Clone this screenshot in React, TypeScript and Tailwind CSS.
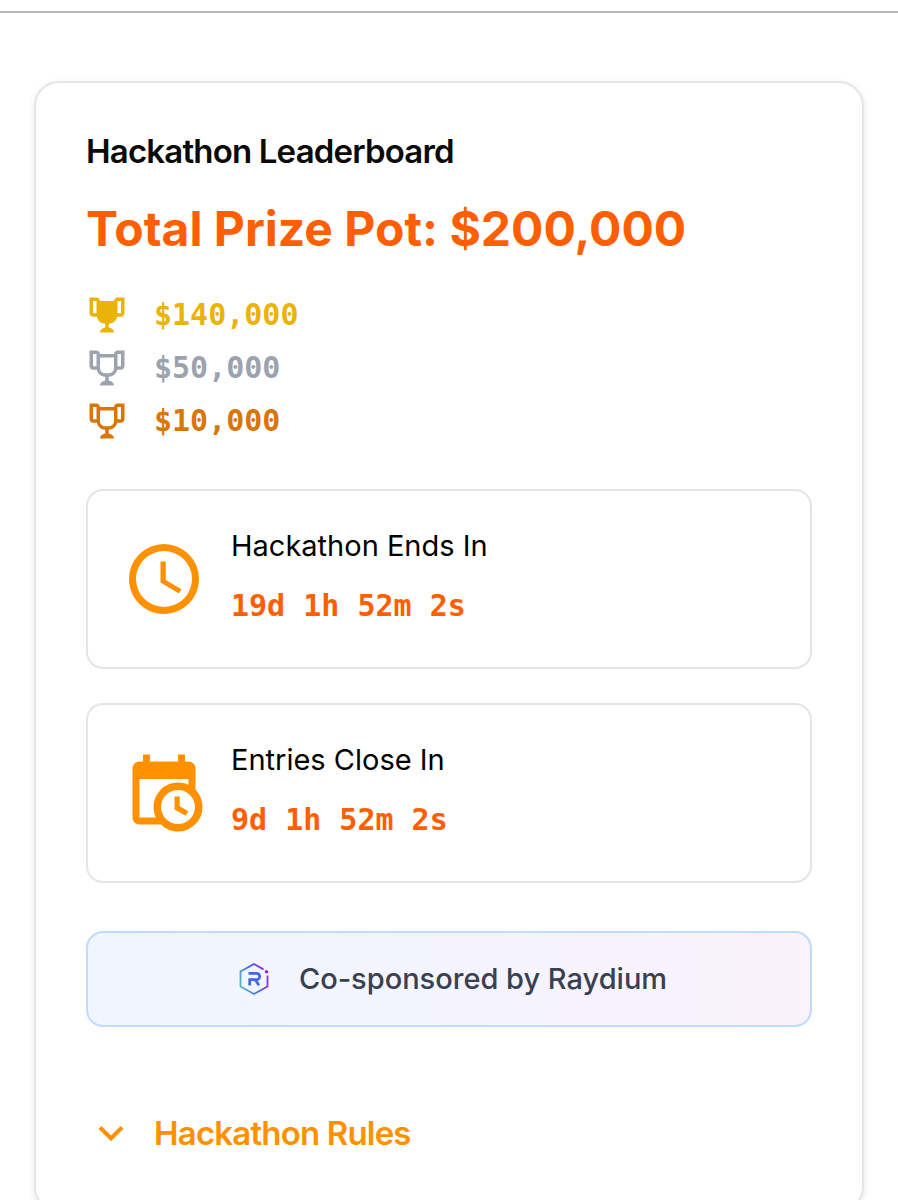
import { useState } from 'react';

const ICONS = {
    trophy: 'M18 2C17.1 2 16 3 16 4H8C8 3 6.9 2 6 2H2V11C2 12 3 13 4 13H6.2C6.6 15 7.9 16.7 11 17V19.08C8 19.54 8 22 8 22H16C16 22 16 19.54 13 19.08V17C16.1 16.7 17.4 15 17.8 13H20C21 13 22 12 22 11V2H18M6 11H4V4H6V11M20 11H18V4H20V11Z',
    trophyOutline:
        'M18 2C17.1 2 16 3 16 4H8C8 3 6.9 2 6 2H2V11C2 12 3 13 4 13H6.2C6.6 15 7.9 16.7 11 17V19.08C8 19.54 8 22 8 22H16C16 22 16 19.54 13 19.08V17C16.1 16.7 17.4 15 17.8 13H20C21 13 22 12 22 11V2H18M6 11H4V4H6V11M16 11.5C16 13.43 15.42 15 12 15C8.58 15 8 13.43 8 11.5V6H16V11.5M20 11H18V4H20V11Z',
    clock: 'M12 20A8 8 0 0 0 20 12A8 8 0 0 0 12 4A8 8 0 0 0 4 12A8 8 0 0 0 12 20M12 2A10 10 0 0 1 22 12A10 10 0 0 1 12 22C6.47 22 2 17.5 2 12A10 10 0 0 1 12 2M12.5 7V12.25L17 14.92L16.25 16.15L11 13V7H12.5Z',
    calendarClock:
        'M15 13H16.5V15.82L18.94 17.23L18.19 18.53L15 16.69V13M19 8H5V19H9.67C9.24 18.09 9 17.07 9 16A7 7 0 0 1 16 9C17.07 9 18.09 9.24 19 9.67V8M5 21C3.89 21 3 20.1 3 19V5C3 3.89 3.89 3 5 3H6V1H8V3H16V1H18V3H19A2 2 0 0 1 21 5V11.1C22.24 12.36 23 14.09 23 16A7 7 0 0 1 16 23C14.09 23 12.36 22.24 11.1 21H5M16 11.15A4.85 4.85 0 0 0 11.15 16C11.15 18.68 13.32 20.85 16 20.85A4.85 4.85 0 0 0 20.85 16C20.85 13.32 18.68 11.15 16 11.15Z',
    chevronDown: 'M7.41 8.58L12 13.17L16.59 8.58L18 10L12 16L6 10L7.41 8.58Z',
};

type IconProps = {
    path: string;
    className?: string;
};

function Icon({ path, className }: IconProps) {
    return (
        <svg viewBox="0 0 24 24" fill="currentColor" aria-hidden="true" className={className}>
            <path d={path} />
        </svg>
    );
}

function RaydiumLogo() {
    return (
        <svg viewBox="0 0 34 34" fill="none" aria-hidden="true" className="size-[34px] shrink-0">
            <defs>
                <linearGradient id="raydium" x1="31" y1="10" x2="2" y2="23" gradientUnits="userSpaceOnUse">
                    <stop stopColor="#a21fe8" />
                    <stop offset="0.5" stopColor="#4b62e6" />
                    <stop offset="1" stopColor="#4fc0c4" />
                </linearGradient>
            </defs>
            <path
                d="M30.5 13.5V24.5L17 32L3.5 24.5V9.5L17 2L26.5 7.4"
                stroke="url(#raydium)"
                strokeWidth="1.8"
            />
            <circle cx="29.5" cy="9.7" r="1.8" fill="#a21fe8" />
            <path
                d="M11.5 11.3H19.5A3.2 3.2 0 0 1 19.5 17.7H12.7V23.5M18.7 18.5L22 23.2"
                stroke="#4463e8"
                strokeWidth="2.7"
            />
        </svg>
    );
}

const prizes = [
    { amount: '$140,000', icon: ICONS.trophy, color: 'text-[#eab308]' },
    { amount: '$50,000', icon: ICONS.trophyOutline, color: 'text-[#9ca3af]' },
    { amount: '$10,000', icon: ICONS.trophyOutline, color: 'text-[#d97706]' },
];

const timers = [
    { label: 'Hackathon Ends In', value: '19d 1h 52m 2s', icon: ICONS.clock },
    { label: 'Entries Close In', value: '9d 1h 52m 2s', icon: ICONS.calendarClock },
];

export default function App() {
    const [rulesOpen, setRulesOpen] = useState(false);

    return (
        <div className="bg-white pt-[11px] font-['Inter',sans-serif] text-[#0a0a0a]">
            <hr className="border-t-2 border-[#b8b8b8]" />
            <main className="mt-[68px] px-[34px]">
                <section className="rounded-[25px] border-2 border-[#e5e5e5] px-[50px] pt-[47px] pb-[52px] shadow-[0_2px_6px_rgba(0,0,0,0.1)]">
                    <h2 className="text-[33px] leading-[42px] font-semibold tracking-tight">Hackathon Leaderboard</h2>
                    <p className="mt-6 text-[48px] leading-[66px] font-bold text-[#ff5f00]">
                        Total Prize Pot: $200,000
                    </p>

                    <ul className="mt-8 flex flex-col gap-[11px]">
                        {prizes.map((prize) => (
                            <li key={prize.amount} className={`flex items-center gap-[26px] ${prize.color}`}>
                                <Icon path={prize.icon} className="size-[42px] shrink-0" />
                                <span className="font-['DejaVu_Sans_Mono',monospace] text-[30px] leading-[42px] font-bold">
                                    {prize.amount}
                                </span>
                            </li>
                        ))}
                    </ul>

                    <div className="mt-[47px] flex flex-col gap-[34px]">
                        {timers.map((timer) => (
                            <div
                                key={timer.label}
                                className="flex items-center gap-[25px] rounded-[17px] border-2 border-[#e5e5e5] px-[34px] py-[33px]"
                            >
                                <Icon path={timer.icon} className="size-[84px] shrink-0 text-[#ff9100]" />
                                <div className="pb-[6px]">
                                    <div className="text-[29px] leading-[44px] text-black">{timer.label}</div>
                                    <div className="mt-4 font-['DejaVu_Sans_Mono',monospace] text-[30px] leading-[44px] font-bold text-[#ff5f00]">
                                        {timer.value}
                                    </div>
                                </div>
                            </div>
                        ))}
                    </div>

                    <a
                        href="#raydium"
                        className="mt-[48px] flex items-center justify-center gap-7 rounded-[17px] border-2 border-[#bfdbfe] bg-linear-to-r from-[#eff6ff] to-[#faf2fd] py-[25px] pl-1.5 text-[29px] leading-[42px] font-medium text-[#374151]"
                    >
                        <RaydiumLogo />
                        Co-sponsored by Raydium
                    </a>

                    <button
                        type="button"
                        aria-expanded={rulesOpen}
                        onClick={() => setRulesOpen(!rulesOpen)}
                        className="mt-[81px] flex items-center gap-[18px] text-[33px] leading-[46px] font-semibold tracking-tight text-[#ff9100]"
                    >
                        <Icon path={ICONS.chevronDown} className="size-[50px] shrink-0" />
                        Hackathon Rules
                    </button>
                </section>
            </main>
        </div>
    );
}
